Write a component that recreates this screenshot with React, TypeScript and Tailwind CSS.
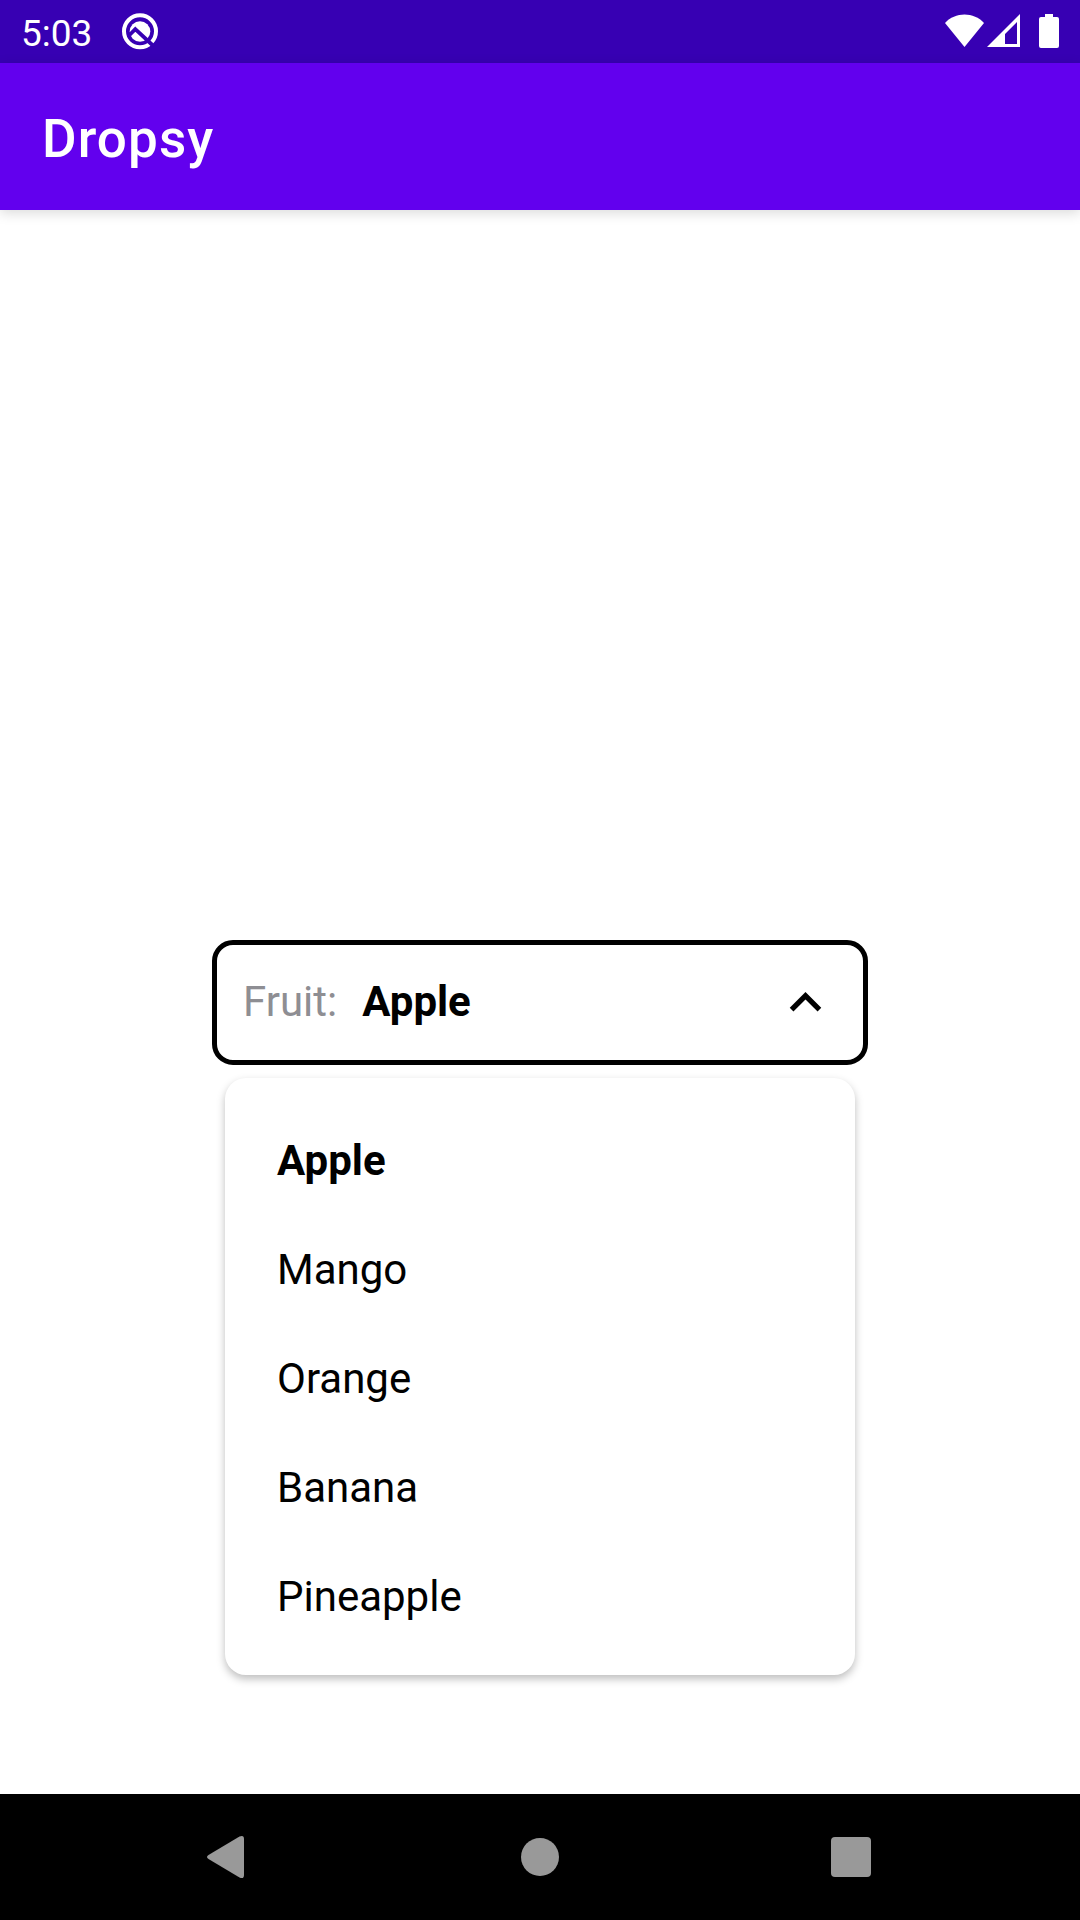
const fruits = ["Apple", "Mango", "Orange", "Banana", "Pineapple"];

function StatusBar() {
  return (
    <div className="flex h-[63px] items-center bg-[#3700b3] pl-[21px] pr-[20px]">
      <span className="w-[71px] pt-[3px] text-[37px] leading-[43px]">5:03</span>
      <svg className="ml-[29px]" width="38" height="39" viewBox="121 12 38 39">
        <circle cx="140" cy="31.3" r="16" fill="none" stroke="white" strokeWidth="4" />
        <circle cx="140" cy="31.5" r="10.3" fill="white" />
        <path d="M129.5 35L135.3 29.2L154 46.5" fill="none" stroke="#3700b3" strokeWidth="3.8" />
      </svg>
      <div className="flex-1" />
      <svg width="116" height="41" viewBox="944 11 116 41" fill="white">
        <path d="M945 23C955 11.5 974 11.5 984 23L964.5 47Z" />
        <path fillRule="evenodd" d="M1020 14V47H987ZM1017 22L1005 34V44H1017Z" />
        <path d="M1045 14H1053V17H1057Q1059 17 1059 19V46Q1059 48 1057 48H1041Q1039 48 1039 46V19Q1039 17 1041 17H1045Z" />
      </svg>
    </div>
  );
}

export default function App() {
  return (
    <div className="flex h-[1920px] w-[1080px] flex-col bg-white font-['Roboto',sans-serif] text-white">
      <StatusBar />
      <header className="z-10 flex h-[147px] items-center bg-[#6200ee] pl-[42px] pt-[4px] shadow-[0_3px_12px_rgba(0,0,0,0.15)]">
        <h1 className="text-[53px] font-medium leading-[62px] tracking-[1.1px]">Dropsy</h1>
      </header>
      <main className="flex flex-1 flex-col items-center pt-[730px] text-[42px] text-black">
        <div className="flex h-[125px] w-[656px] items-center rounded-[21px] border-[5px] border-black px-[26px]">
          <span className="pb-[2px] text-[#8e8e93]">Fruit:</span>
          <span className="ml-[25px] pb-[2px] font-bold">Apple</span>
          <svg className="ml-auto" width="63" height="63" viewBox="0 0 24 24" fill="black">
            <path d="M12 8l-6 6 1.41 1.41L12 10.83l4.59 4.58L18 14z" />
          </svg>
        </div>
        <ul className="mt-[13px] h-[597px] w-[630px] rounded-[21px] bg-white pl-[52px] pt-[28px] shadow-[0_4px_8px_rgba(0,0,0,0.26)]">
          {fruits.map((fruit, i) => (
            <li key={fruit} className={i === 0 ? "h-[109px] font-bold leading-[109px]" : "h-[109px] leading-[109px]"}>
              {fruit}
            </li>
          ))}
        </ul>
      </main>
      <nav className="flex h-[126px] bg-black pl-[206px]">
        <svg width="668" height="126" viewBox="206 1794 668 126" fill="#999999">
          <path d="M239.5 1836.5Q244 1834.5 244 1839V1875Q244 1879.500 239.500 1877.500L208.500 1859Q205.500 1857 208.500 1855Z" />
          <circle cx="540" cy="1857" r="19" />
          <rect x="831" y="1837" width="40" height="40" rx="4" />
        </svg>
      </nav>
    </div>
  );
}
